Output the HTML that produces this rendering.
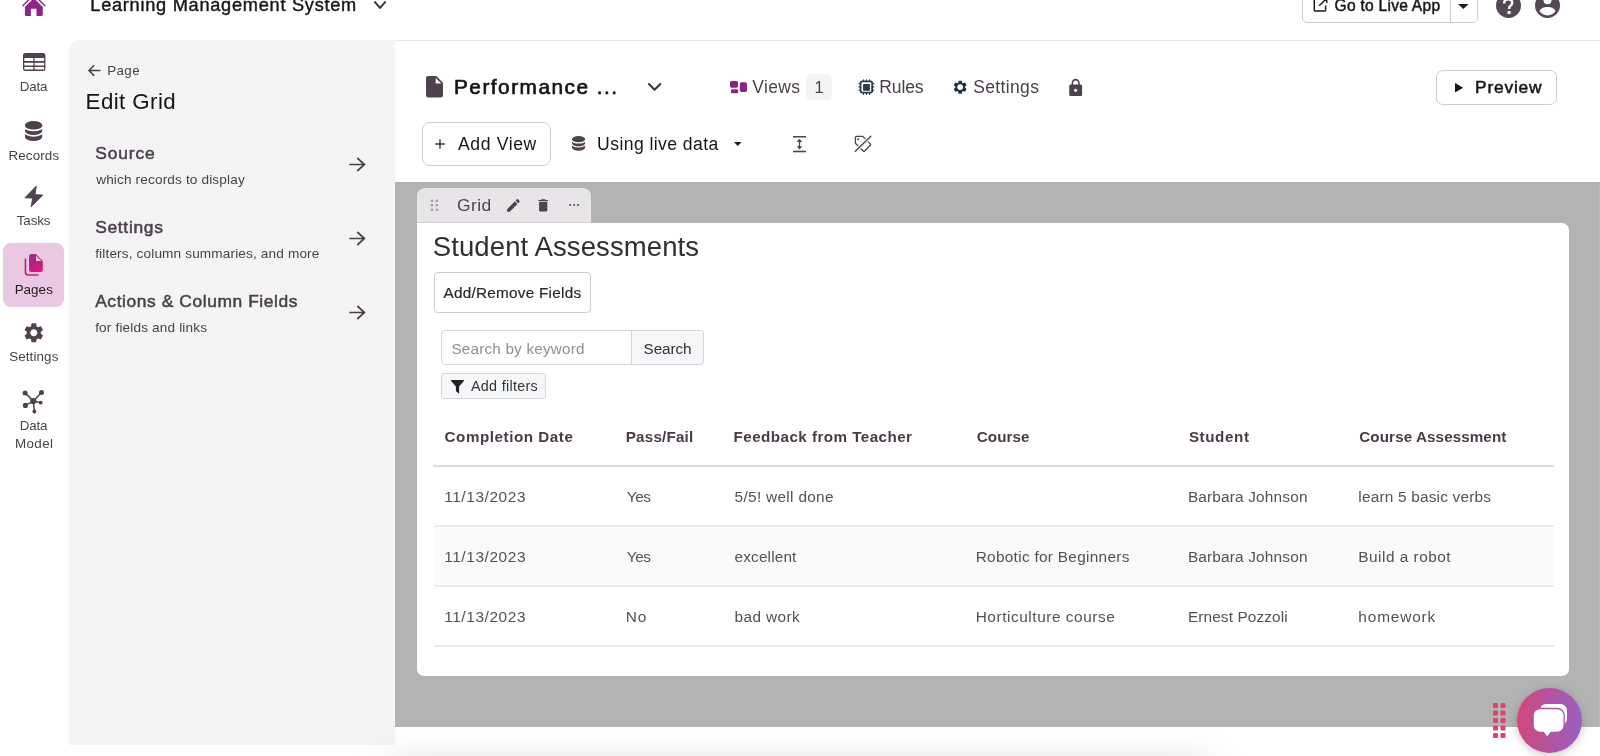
<!DOCTYPE html>
<html>
<head>
<meta charset="utf-8">
<title>Learning Management System</title>
<style>
*{box-sizing:border-box;margin:0;padding:0}
html,body{width:1600px;height:756px;overflow:hidden;background:#fff}
body{font-family:"Liberation Sans",sans-serif;color:#4a3f4b;position:relative}
.abs{position:absolute}
.t{position:absolute;white-space:nowrap;line-height:1}
svg{position:absolute;overflow:visible}
.btn{position:absolute;background:#fff;border:1px solid #cfcccf}
</style>
</head>
<body>
<div id="root" style="position:absolute;left:0;top:0;width:1600px;height:756px;overflow:hidden;will-change:transform">
<!-- TOP BAR -->
<div class="abs" style="left:395px;top:40px;width:1205px;height:1px;background:#e7e7e7"></div>
<svg style="left:0;top:0" width="60" height="20" viewBox="0 0 60 20"><path d="M24.9 7.1 L33.85 -1.85 L42.8 7.1 V14.8 a1.1 1.1 0 0 1 -1.1 1.1 H36.5 V8.7 H30.9 V15.9 H26 a1.1 1.1 0 0 1 -1.1 -1.1 Z" fill="#8e2585"/><path d="M22.9 5.7 L33.85 -5.25 L44.8 5.7" fill="none" stroke="#8e2585" stroke-width="1.4" stroke-linecap="round"/></svg><div class="t" style="left:90.30px;top:-4.00px;font-size:18.2px;color:#161616;letter-spacing:0.730px;-webkit-text-stroke:.4px #161616;">Learning Management System</div>
<svg style="left:370px;top:0px" width="20" height="12" viewBox="370 0 20 12"><path d="M375 2.1 L380.05 7.9 L385.1 2.1" fill="none" stroke="#3d323c" stroke-width="2" stroke-linecap="round" stroke-linejoin="round"/></svg>
<div class="btn" style="left:1302px;top:-12px;width:176px;height:34.5px;border-radius:5px"></div>
<div class="abs" style="left:1450px;top:-12px;width:1px;height:34px;background:#cfcccf"></div>
<svg style="left:1313.4px;top:-3.4px" width="15" height="15" viewBox="0 0 15 15"><path d="M6.3 2.2 H1.9 a.6 .6 0 0 0 -.6 .6 V13.3 a.6 .6 0 0 0 .6 .6 H12 a.6 .6 0 0 0 .6 -.6 V8.6" fill="none" stroke="#1d1d1d" stroke-width="1.5"/><path d="M6.2 8.8 L13.2 1.8 M8.9 1.3 H13.7 V6.1" fill="none" stroke="#1d1d1d" stroke-width="1.5"/></svg><div class="t" style="left:1334.60px;top:-2.00px;font-size:15.6px;color:#161616;letter-spacing:0.244px;-webkit-text-stroke:.45px #161616;">Go to Live App</div>
<svg style="left:1458.4px;top:3.5px" width="10.6" height="5" viewBox="0 0 10.6 5"><path d="M0 0 H10.6 L5.3 5 Z" fill="#1d1d1d"/></svg>
<svg style="left:1496px;top:-7.2px" width="25" height="25" viewBox="0 0 25 25"><circle cx="12.5" cy="12.5" r="12.5" fill="#554852"/><g transform="translate(-0.4 1.1)"><path d="M8.6 9.3 C8.6 6.6 10.4 5.2 12.6 5.2 C14.9 5.2 16.6 6.6 16.6 8.7 C16.6 10.4 15.6 11.2 14.6 12 C13.8 12.6 13.5 13.2 13.5 15" fill="none" stroke="#fff" stroke-width="2.5"/><rect x="11.9" y="17" width="3.2" height="3" rx=".6" fill="#fff"/></g></svg>
<svg style="left:1535px;top:-7.2px" width="25" height="25" viewBox="0 0 25 25"><circle cx="12.5" cy="12.5" r="12.5" fill="#554852"/><circle cx="12.5" cy="7.2" r="4" fill="#fff"/><path d="M4.6 18.6 C4.6 15.4 9.5 14 12.5 14 C15.5 14 20.4 15.4 20.4 18.6 C18.5 21 15.7 22.4 12.5 22.4 C9.3 22.4 6.5 21 4.6 18.6 Z" fill="#fff"/></svg>
<!-- LEFT NAV -->
<div class="abs" style="left:3px;top:243px;width:61px;height:64px;border-radius:8px;background:#eac8e2"></div>
<svg style="left:22.7px;top:53px" width="22.4" height="18" viewBox="0 0 22.4 18"><rect x="0" y="0" width="22.4" height="18" rx="2.2" fill="#4f414d"/><rect x="1.3" y="5.1" width="9.1" height="2.95" rx=".5" fill="#fff"/><rect x="11.6" y="5.1" width="9.5" height="2.95" rx=".5" fill="#fff"/><rect x="1.3" y="9.7" width="9.1" height="2.8" rx=".5" fill="#fff"/><rect x="11.6" y="9.7" width="9.5" height="2.8" rx=".5" fill="#fff"/><rect x="1.3" y="13.95" width="9.1" height="2.6" rx=".5" fill="#fff"/><rect x="11.6" y="13.95" width="9.5" height="2.6" rx=".5" fill="#fff"/></svg>
<div class="t" style="left:19.73px;top:80.00px;font-size:13.4px;color:#4a3f4b;letter-spacing:-0.183px;">Data</div>
<svg style="left:25px;top:120.75px" width="17.2" height="20" viewBox="0 0 17.2 20"><path d="M0 4.25 a8.6 4.25 0 0 1 17.2 0 V15.65 a8.6 4.3 0 0 1 -17.2 0 Z" fill="#4f414d"/><path d="M-0.5 5.45 a9.1 3.95 0 0 0 18.2 0" fill="none" stroke="#fff" stroke-width="1.8"/><path d="M-0.5 10.4 a9.1 4.5 0 0 0 18.2 0" fill="none" stroke="#fff" stroke-width="1.7"/></svg>
<div class="t" style="left:8.42px;top:149.00px;font-size:13.4px;color:#4a3f4b;letter-spacing:0.137px;">Records</div>
<svg style="left:0;top:0" width="60" height="210" viewBox="0 0 60 210"><path d="M36.3 186.1 L24.9 197.8 L32.7 198.1 L31.1 206.8 L42.8 195 L35 194.7 Z" fill="#4f414d" stroke="#4f414d" stroke-width="0.9" stroke-linejoin="round"/></svg><div class="t" style="left:16.78px;top:214.00px;font-size:13.4px;color:#4a3f4b;letter-spacing:-0.135px;">Tasks</div>
<svg style="left:24px;top:253px" width="20" height="24" viewBox="0 0 20 24"><defs><linearGradient id="pg" x1="0" y1="0" x2="1" y2="1"><stop offset="0" stop-color="#8f2c8c"/><stop offset="1" stop-color="#e6157a"/></linearGradient></defs><path d="M7.3 1.1 H11.9 L18.8 8 V16.9 a2 2 0 0 1 -2 2 H7.3 a2.2 2.2 0 0 1 -2.2 -2.2 V3.3 a2.2 2.2 0 0 1 2.2 -2.2 Z" fill="url(#pg)"/><path d="M12 2.8 V7.2 a.7 .7 0 0 0 .7 .7 H17.4 Z" fill="#ecc9e2"/><path d="M1.45 5.9 V19.3 a2.6 2.6 0 0 0 2.6 2.6 H14" fill="none" stroke="url(#pg2)" stroke-width="1.55" stroke-linecap="round"/><defs><linearGradient id="pg2" gradientUnits="userSpaceOnUse" x1="0" y1="4" x2="16" y2="24"><stop offset="0" stop-color="#a02a8a"/><stop offset="1" stop-color="#e0157a"/></linearGradient></defs></svg>
<div class="t" style="left:14.63px;top:283.00px;font-size:13.4px;color:#1c1c1c;letter-spacing:0.057px;">Pages</div>
<svg style="left:21.9px;top:321.2px" width="23.6" height="23.6" viewBox="0 0 24 24"><path fill="#4f414d" d="M19.14 12.94c.04-.3.06-.61.06-.94 0-.32-.02-.64-.07-.94l2.030-1.580c.18-.14.23-.41.12-.61l-1.920-3.320c-.12-.22-.37-.29-.59-.22l-2.390.96c-.5-.38-1.030-.7-1.620-.94l-.36-2.540c-.04-.24-.24-.41-.48-.41h-3.840c-.24 0-.43.17-.47.41l-.36 2.540c-.59.24-1.130.57-1.620.94l-2.390-.96c-.22-.08-.47 0-.59.22L2.740 8.870c-.12.21-.08.47.12.61l2.030 1.580c-.05.3-.09.630-.09.940s.02.640.07.940l-2.030 1.580c-.18.14-.23.410-.12.610l1.920 3.320c.12.220.37.290.59.220l2.390-.96c.5.380 1.030.7 1.620.94l.36 2.540c.05.240.24.410.48.410h3.840c.24 0 .44-.17.470-.41l.36-2.540c.59-.24 1.130-.56 1.620-.94l2.390.96c.22.080.47 0 .59-.22l1.920-3.320c.12-.22.070-.47-.12-.61l-2.010-1.580zM12 15.600c-1.980 0-3.600-1.620-3.600-3.600s1.620-3.600 3.600-3.600 3.600 1.620 3.600 3.600-1.620 3.600-3.600 3.600z"/></svg>
<div class="t" style="left:9.16px;top:350.00px;font-size:13.4px;color:#4a3f4b;letter-spacing:0.115px;">Settings</div>
<svg style="left:0;top:0" width="70" height="420" viewBox="0 0 70 420"><g stroke="#4f414d" stroke-width="1.5" fill="#4f414d"><line x1="33.3" y1="401.1" x2="25.1" y2="392.9"/><line x1="33.3" y1="401.1" x2="41.5" y2="392.4"/><line x1="33.3" y1="401.1" x2="40.7" y2="402.7"/><line x1="33.3" y1="401.1" x2="25.4" y2="405.4"/><line x1="33.3" y1="401.1" x2="34.4" y2="411.5"/><circle cx="33.3" cy="401.1" r="3.1" stroke="none"/><circle cx="25.1" cy="392.9" r="2.5" stroke="none"/><circle cx="41.5" cy="392.4" r="2.5" stroke="none"/><circle cx="40.7" cy="402.7" r="1.9" stroke="none"/><circle cx="25.4" cy="405.4" r="2.6" stroke="none"/><circle cx="34.4" cy="411.5" r="1.9" stroke="none"/></g></svg>
<div class="t" style="left:19.73px;top:419.00px;font-size:13.4px;color:#4a3f4b;letter-spacing:-0.183px;">Data</div>
<div class="t" style="left:15.00px;top:437.00px;font-size:13.4px;color:#4a3f4b;letter-spacing:0.373px;">Model</div>
<!-- SIDE PANEL -->
<div class="abs" style="left:69px;top:40px;width:326px;height:705px;background:#f4f4f4;border-top-left-radius:10px"></div>
<svg style="left:88.4px;top:65.4px" width="12.6" height="11.2" viewBox="0 0 12.6 11.2"><path d="M11.9 5.6 H1 M5.7 0.8 L0.9 5.6 L5.7 10.4" fill="none" stroke="#4a3f4b" stroke-width="1.5" stroke-linecap="round" stroke-linejoin="round"/></svg>
<div class="t" style="left:107.20px;top:64.00px;font-size:13.3px;color:#4a3f4b;letter-spacing:0.444px;">Page</div>
<div class="t" style="left:85.60px;top:91.00px;font-size:22.3px;color:#141414;letter-spacing:0.419px;">Edit Grid</div>
<div class="t" style="left:95.20px;top:145.00px;font-size:17.4px;color:#4a3f4b;letter-spacing:0.872px;-webkit-text-stroke:.5px #4a3f4b;">Source</div>
<div class="t" style="left:96.20px;top:173.00px;font-size:13.6px;color:#4a3f4b;letter-spacing:0.149px;">which records to display</div>
<svg style="left:348.7px;top:156.7px" width="16.5" height="15" viewBox="0 0 16.5 15"><path d="M0.3 7.5 H15 M8.3 1 L15.4 7.5 L8.3 14" fill="none" stroke="#4a3f4b" stroke-width="1.7" stroke-linecap="butt" stroke-linejoin="miter"/></svg>
<div class="t" style="left:95.20px;top:219.00px;font-size:17.4px;color:#4a3f4b;letter-spacing:0.693px;-webkit-text-stroke:.5px #4a3f4b;">Settings</div>
<div class="t" style="left:95.20px;top:247.00px;font-size:13.6px;color:#4a3f4b;letter-spacing:0.149px;">filters, column summaries, and more</div>
<svg style="left:348.7px;top:230.7px" width="16.5" height="15" viewBox="0 0 16.5 15"><path d="M0.3 7.5 H15 M8.3 1 L15.4 7.5 L8.3 14" fill="none" stroke="#4a3f4b" stroke-width="1.7" stroke-linecap="butt" stroke-linejoin="miter"/></svg>
<div class="t" style="left:95.20px;top:293.00px;font-size:17.4px;color:#4a3f4b;letter-spacing:0.584px;-webkit-text-stroke:.5px #4a3f4b;">Actions &amp; Column Fields</div>
<div class="t" style="left:95.20px;top:321.00px;font-size:13.6px;color:#4a3f4b;letter-spacing:0.157px;">for fields and links</div>
<svg style="left:348.7px;top:304.7px" width="16.5" height="15" viewBox="0 0 16.5 15"><path d="M0.3 7.5 H15 M8.3 1 L15.4 7.5 L8.3 14" fill="none" stroke="#4a3f4b" stroke-width="1.7" stroke-linecap="butt" stroke-linejoin="miter"/></svg>
<!-- MAIN HEADER -->
<svg style="left:426.1px;top:76.2px" width="17" height="21.4" viewBox="0 0 17 21.4"><path d="M2.2 0 H10.3 L17 6.7 V19.2 a2.2 2.2 0 0 1 -2.2 2.2 H2.2 a2.2 2.2 0 0 1 -2.2 -2.2 V2.2 a2.2 2.2 0 0 1 2.2 -2.2 Z" fill="#4f414d"/><path d="M9.7 2.1 V6.9 a.6 .6 0 0 0 .6 .6 H15.3 Z" fill="#fff"/></svg>
<div class="t" style="left:454.00px;top:77.00px;font-size:20.8px;color:#141414;letter-spacing:1.493px;-webkit-text-stroke:.65px #141414;">Performance ...</div>
<svg style="left:644px;top:80px" width="22" height="14" viewBox="644 80 22 14"><path d="M648.9 84 L654.6 89.8 L660.3 84" fill="none" stroke="#3d323c" stroke-width="2" stroke-linecap="round" stroke-linejoin="round"/></svg>
<svg style="left:730px;top:80.8px" width="17" height="12.300" viewBox="0 0 17 12.300"><g fill="#8b2482"><rect x="0" y="0" width="8" height="6.700" rx="1.600"/><rect x="1" y="8.200" width="7.200" height="4" rx="1.300"/><rect x="9.800" y="1.200" width="7.200" height="9.800" rx="1.700"/></g></svg>
<div class="t" style="left:752.30px;top:79.00px;font-size:17.5px;color:#4a3f4b;letter-spacing:0.344px;">Views</div>
<div class="abs" style="left:805.5px;top:74.2px;width:26px;height:25.500px;border-radius:5px;background:#f4f4f4"></div>
<div class="t" style="left:814.60px;top:79.00px;font-size:16.5px;color:#4a3f4b;">1</div>
<svg style="left:850px;top:70px" width="30" height="30" viewBox="850 70 30 30"><g fill="#2d3b4a"><rect x="862.85" y="79.2" width="1.1" height="15.7" rx=".5"/><rect x="865.85" y="79.2" width="1.1" height="15.7" rx=".5"/><rect x="869.00" y="79.2" width="1.1" height="15.7" rx=".5"/><rect x="858.4" y="83.05" width="15.9" height="1.1" rx=".5"/><rect x="858.4" y="86.35" width="15.9" height="1.1" rx=".5"/><rect x="858.4" y="89.65" width="15.9" height="1.1" rx=".5"/><rect x="859.7" y="80.55" width="13.35" height="13" rx="2.4"/></g><rect x="861.45" y="82.3" width="9.8" height="9.5" rx="1" fill="#fff"/><rect x="863.05" y="84.05" width="6.85" height="6.65" rx=".4" fill="#2d3b4a"/></svg>
<div class="t" style="left:879.30px;top:79.00px;font-size:17.5px;color:#4a3f4b;letter-spacing:-0.125px;">Rules</div>
<svg style="left:951.75px;top:79.1px" width="16.300" height="16.300" viewBox="0 0 24 24"><path fill="#1f2c3b" d="M19.14 12.94c.04-.3.06-.61.06-.94 0-.32-.02-.64-.07-.94l2.030-1.580c.18-.14.23-.41.12-.61l-1.920-3.320c-.12-.22-.37-.29-.59-.22l-2.390.96c-.5-.38-1.030-.7-1.620-.94l-.36-2.540c-.04-.24-.24-.41-.48-.41h-3.840c-.24 0-.43.17-.47.41l-.36 2.540c-.59.24-1.130.57-1.620.94l-2.390-.96c-.22-.08-.47 0-.59.22L2.740 8.870c-.12.21-.08.47.12.61l2.030 1.580c-.05.3-.09.630-.09.940s.02.640.07.940l-2.030 1.580c-.18.14-.23.410-.12.610l1.920 3.320c.12.220.37.290.59.220l2.390-.96c.5.380 1.030.7 1.620.94l.36 2.540c.05.240.24.410.48.410h3.840c.24 0 .44-.17.470-.41l.36-2.540c.59-.24 1.130-.56 1.620-.94l2.390.96c.22.080.47 0 .59-.22l1.920-3.320c.12-.22.070-.47-.12-.61l-2.010-1.580zM12 15.600c-1.980 0-3.600-1.620-3.600-3.600s1.620-3.600 3.600-3.600 3.600 1.620 3.600 3.600-1.620 3.600-3.600 3.600z"/><circle cx="12" cy="12" r="4.1" fill="#fff"/></svg>
<div class="t" style="left:973.20px;top:79.00px;font-size:17.5px;color:#4a3f4b;letter-spacing:0.359px;">Settings</div>
<svg style="left:1065.9px;top:77.75px" width="19.35" height="19.7" viewBox="0 0 24 24" preserveAspectRatio="none"><path fill="#4f414d" d="M18 8h-1V6c0-2.760-2.240-5-5-5S7 3.240 7 6v2H6c-1.100 0-2 .9-2 2v10c0 1.100.9 2 2 2h12c1.100 0 2-.9 2-2V10c0-1.100-.9-2-2-2zm-6 9c-1.100 0-2-.9-2-2s.9-2 2-2 2 .9 2 2-.9 2-2 2zm3.100-9H8.900V6c0-1.710 1.390-3.100 3.100-3.100 1.710 0 3.100 1.390 3.100 3.100v2z"/></svg>
<div class="btn" style="left:1436px;top:70px;width:120.500px;height:34.500px;border-radius:7px"></div>
<svg style="left:1455px;top:82.500px" width="8.200" height="9.600" viewBox="0 0 8.200 9.600"><path d="M0 0 L8.200 4.800 L0 9.600 Z" fill="#161616"/></svg>
<div class="t" style="left:1475.00px;top:79.00px;font-size:17.4px;color:#141414;letter-spacing:0.783px;-webkit-text-stroke:.5px #141414;">Preview</div>
<div class="btn" style="left:421.500px;top:122px;width:129.500px;height:43.500px;border-radius:8px"></div>
<svg style="left:435px;top:138.800px" width="10" height="10" viewBox="0 0 10 10"><path d="M5 0.300 V9.700 M0.300 5 H9.700" stroke="#3d323c" stroke-width="1.400" fill="none"/></svg>
<div class="t" style="left:458.00px;top:136.00px;font-size:17.6px;color:#161616;letter-spacing:0.613px;">Add View</div>
<svg style="left:572px;top:136.25px" width="13.1" height="14.7" viewBox="0 0 17.2 20" preserveAspectRatio="none"><path d="M0 4.25 a8.6 4.25 0 0 1 17.2 0 V15.65 a8.6 4.3 0 0 1 -17.2 0 Z" fill="#4f414d"/><path d="M-0.5 5.45 a9.1 3.95 0 0 0 18.2 0" fill="none" stroke="#fff" stroke-width="1.9"/><path d="M-0.5 10.4 a9.1 4.5 0 0 0 18.2 0" fill="none" stroke="#fff" stroke-width="1.8"/></svg>
<div class="t" style="left:597.10px;top:136.00px;font-size:17.6px;color:#161616;letter-spacing:0.413px;">Using live data</div>
<svg style="left:734.300px;top:142.300px" width="7.600" height="3.900" viewBox="0 0 7.600 3.900"><path d="M0 0 H7.600 L3.800 3.900 Z" fill="#1d1d1d"/></svg>
<svg style="left:793px;top:135.600px" width="13" height="16.300" viewBox="0 0 13 16.300"><g fill="#4f414d"><rect x="0" y="0" width="13" height="1.500"/><rect x="0" y="14.700" width="13" height="1.600"/><rect x="5.850" y="4" width="1.300" height="8.300"/><path d="M6.500 2.700 L9.300 5.900 H3.700 Z M6.500 13.500 L9.300 10.300 H3.700 Z"/></g></svg>
<svg style="left:854px;top:135px" width="18" height="17.500" viewBox="0 0 18 17.500"><path d="M1.400 2.600 a1.300 1.300 0 0 1 1.300 -1.300 h6 l7.600 7.600 a1 1 0 0 1 0 1.400 l-5.700 5.700 a1 1 0 0 1 -1.400 0 l-7.800 -7.800 z" fill="none" stroke="#4f414d" stroke-width="1.300"/><circle cx="4.100" cy="4.200" r="1" fill="#4f414d"/><path d="M17.200 1 L0.800 16.800" stroke="#fff" stroke-width="3.600"/><path d="M16.800 1.300 L1.400 16.300" stroke="#4f414d" stroke-width="1.400" stroke-linecap="round"/></svg>
<!-- CANVAS -->
<div class="abs" style="left:395px;top:182px;width:1205px;height:544.600px;background:#b3b3b3;border-top:1px solid #adadad"></div>
<div class="abs" style="left:1599px;top:182.500px;width:1px;height:544px;background:#bbbbbb"></div>
<div class="abs" style="left:400px;top:776px;width:800px;height:60px;box-shadow:0 0 40px 10px rgba(0,0,0,.17)"></div>
<div class="abs" style="left:417.400px;top:188px;width:174px;height:36px;background:#e8e5e8;border-radius:8px 8px 0 0"></div>
<div class="abs" style="left:417.400px;top:222.800px;width:1151.800px;height:453px;background:#fff;border-radius:0 7px 7px 7px"></div>
<div class="abs" style="left:417.400px;top:221.800px;width:174px;height:1px;background:#d3cfd3"></div>
<svg style="left:0;top:0" width="600" height="230" viewBox="0 0 600 230"><g fill="#a59da5"><circle cx="432" cy="200.9" r="1.300"/><circle cx="432" cy="205.3" r="1.300"/><circle cx="432" cy="209.7" r="1.300"/><circle cx="436.9" cy="200.9" r="1.300"/><circle cx="436.9" cy="205.3" r="1.300"/><circle cx="436.9" cy="209.7" r="1.300"/></g><g fill="#4f414d"><circle cx="570.200" cy="205.100" r="1"/><circle cx="574.100" cy="205.100" r="1"/><circle cx="578.050" cy="205.100" r="1"/></g></svg>
<div class="t" style="left:457.00px;top:197.00px;font-size:17.4px;color:#4f414d;letter-spacing:0.404px;">Grid</div>
<svg style="left:504.500px;top:196.800px" width="16.900" height="16.900" viewBox="0 0 24 24"><path fill="#4f414d" d="M3 17.250V21h3.750L17.810 9.940l-3.750-3.750L3 17.250zM20.710 7.040c.39-.39.39-1.020 0-1.410l-2.340-2.340c-.39-.39-1.020-.39-1.410 0l-1.830 1.830 3.750 3.750 1.830-1.830z"/></svg>
<svg style="left:535.300px;top:196.700px" width="16.400" height="16.800" viewBox="0 0 24 24"><path fill="#4f414d" d="M6 19c0 1.100.9 2 2 2h8c1.100 0 2-.9 2-2V7H6v12zM19 4h-3.500l-1-1h-5l-1 1H5v2h14V4z"/></svg>
<div class="t" style="left:432.80px;top:233.00px;font-size:27.5px;color:#303030;letter-spacing:0.100px;">Student Assessments</div>
<div class="btn" style="left:433.500px;top:272px;width:157.500px;height:40.600px;border-radius:4px;border-color:#cccccc"></div>
<div class="t" style="left:443.60px;top:285.00px;font-size:15.3px;color:#262626;letter-spacing:0.248px;-webkit-text-stroke:.15px #262626;">Add/Remove Fields</div>
<div class="abs" style="left:441px;top:330.400px;width:191px;height:34.600px;border:1px solid #d3d7dc;border-radius:4px 0 0 4px;background:#fff"></div>
<div class="t" style="left:451.40px;top:341.00px;font-size:15.3px;color:#968d94;letter-spacing:0.188px;">Search by keyword</div>
<div class="abs" style="left:631px;top:330.400px;width:72.500px;height:34.600px;border:1px solid #d3d7dc;border-radius:0 4px 4px 0;background:#f6f7f9"></div>
<div class="t" style="left:643.60px;top:341.00px;font-size:15.3px;color:#333;letter-spacing:-0.112px;">Search</div>
<div class="abs" style="left:441px;top:373.200px;width:104.800px;height:25.600px;border:1px solid #d3d7dc;border-radius:3px;background:#f6f7f9"></div>
<svg style="left:451px;top:379.600px" width="13" height="13.400" viewBox="0 0 13 13.400"><path d="M0.600 0 H12.400 a.6 .6 0 0 1 .45 1 L8.100 6.400 V13 a.4 .4 0 0 1 -.65 .3 L5.100 11.300 a.6 .6 0 0 1 -.2 -.45 V6.400 L0.150 1 A.6 .6 0 0 1 .6 0 Z" fill="#222"/></svg>
<div class="t" style="left:471.00px;top:379.00px;font-size:14.3px;color:#333;letter-spacing:0.317px;">Add filters</div>
<div class="t" style="left:444.60px;top:429.00px;font-size:15.2px;color:#4a3a48;font-weight:bold;letter-spacing:0.541px;">Completion Date</div>
<div class="t" style="left:625.80px;top:429.00px;font-size:15.2px;color:#4a3a48;font-weight:bold;letter-spacing:0.195px;">Pass/Fail</div>
<div class="t" style="left:733.60px;top:429.00px;font-size:15.2px;color:#4a3a48;font-weight:bold;letter-spacing:0.451px;">Feedback from Teacher</div>
<div class="t" style="left:976.70px;top:429.00px;font-size:15.2px;color:#4a3a48;font-weight:bold;letter-spacing:0.104px;">Course</div>
<div class="t" style="left:1188.90px;top:429.00px;font-size:15.2px;color:#4a3a48;font-weight:bold;letter-spacing:0.588px;">Student</div>
<div class="t" style="left:1359.30px;top:429.00px;font-size:15.2px;color:#4a3a48;font-weight:bold;letter-spacing:0.099px;">Course Assessment</div>
<div class="abs" style="left:433px;top:465px;width:1120.500px;height:2px;background:#dddddd"></div>
<div class="abs" style="left:434px;top:527px;width:1119.500px;height:58px;background:#fafafa"></div>
<div class="abs" style="left:434px;top:525px;width:1119.500px;height:2px;background:#ebebeb"></div>
<div class="abs" style="left:434px;top:585px;width:1119.500px;height:2px;background:#ebebeb"></div>
<div class="abs" style="left:434px;top:645px;width:1119.500px;height:2px;background:#ebebeb"></div>
<div class="t" style="left:444.20px;top:489.00px;font-size:15.4px;color:#555055;letter-spacing:0.597px;">11/13/2023</div>
<div class="t" style="left:626.80px;top:489.00px;font-size:15.4px;color:#555055;letter-spacing:-0.500px;">Yes</div>
<div class="t" style="left:734.60px;top:489.00px;font-size:15.4px;color:#555055;letter-spacing:0.306px;">5/5! well done</div>
<div class="t" style="left:1187.90px;top:489.00px;font-size:15.4px;color:#555055;letter-spacing:0.167px;">Barbara Johnson</div>
<div class="t" style="left:1358.30px;top:489.00px;font-size:15.4px;color:#555055;letter-spacing:0.195px;">learn 5 basic verbs</div>
<div class="t" style="left:444.20px;top:549.00px;font-size:15.4px;color:#555055;letter-spacing:0.597px;">11/13/2023</div>
<div class="t" style="left:626.80px;top:549.00px;font-size:15.4px;color:#555055;letter-spacing:-0.500px;">Yes</div>
<div class="t" style="left:734.60px;top:549.00px;font-size:15.4px;color:#555055;letter-spacing:0.128px;">excellent</div>
<div class="t" style="left:975.70px;top:549.00px;font-size:15.4px;color:#555055;letter-spacing:0.285px;">Robotic for Beginners</div>
<div class="t" style="left:1187.90px;top:549.00px;font-size:15.4px;color:#555055;letter-spacing:0.167px;">Barbara Johnson</div>
<div class="t" style="left:1358.30px;top:549.00px;font-size:15.4px;color:#555055;letter-spacing:0.488px;">Build a robot</div>
<div class="t" style="left:444.20px;top:609.00px;font-size:15.4px;color:#555055;letter-spacing:0.597px;">11/13/2023</div>
<div class="t" style="left:625.80px;top:609.00px;font-size:15.4px;color:#555055;letter-spacing:0.872px;">No</div>
<div class="t" style="left:734.60px;top:609.00px;font-size:15.4px;color:#555055;letter-spacing:0.377px;">bad work</div>
<div class="t" style="left:975.70px;top:609.00px;font-size:15.4px;color:#555055;letter-spacing:0.555px;">Horticulture course</div>
<div class="t" style="left:1187.90px;top:609.00px;font-size:15.4px;color:#555055;letter-spacing:0.111px;">Ernest Pozzoli</div>
<div class="t" style="left:1358.30px;top:609.00px;font-size:15.4px;color:#555055;letter-spacing:0.856px;">homework</div>
<!-- CHAT WIDGET -->
<svg style="left:1493.300px;top:703.400px" width="12.500" height="35" viewBox="0 0 12.500 35"><g fill="#e0426f"><rect x="0" y="0.00" width="5" height="4.900" rx="1.200"/><rect x="0" y="7.50" width="5" height="4.900" rx="1.200"/><rect x="0" y="15.00" width="5" height="4.900" rx="1.200"/><rect x="0" y="22.50" width="5" height="4.900" rx="1.200"/><rect x="0" y="30.00" width="5" height="4.900" rx="1.200"/><rect x="7.5" y="0.00" width="5" height="4.900" rx="1.200"/><rect x="7.5" y="7.50" width="5" height="4.900" rx="1.200"/><rect x="7.5" y="15.00" width="5" height="4.900" rx="1.200"/><rect x="7.5" y="22.50" width="5" height="4.900" rx="1.200"/><rect x="7.5" y="30.00" width="5" height="4.900" rx="1.200"/></g></svg>
<div class="abs" style="left:1517.200px;top:688px;width:65px;height:65px;border-radius:50%;background:linear-gradient(90deg,#d0487c 0%,#b4539f 50%,#9860c2 100%);box-shadow:0 2px 9px rgba(0,0,0,.22)"></div>
<svg style="left:1517.200px;top:688px" width="65" height="65" viewBox="1517.200 688 65 65"><rect x="1539.800" y="704.100" width="27.400" height="21.300" rx="6.500" fill="#fff"/><path d="M1540.300 708.500 H1557.400 a7 7 0 0 1 7 7 V725.300 a7 7 0 0 1 -7 7 H1551.300 L1547.400 737.400 L1543.600 732.300 H1540.300 a7 7 0 0 1 -7 -7 V715.500 a7 7 0 0 1 7 -7 Z" fill="#fff" stroke="#b0549f" stroke-width="1.300"/></svg>
</div>
</body>
</html>
